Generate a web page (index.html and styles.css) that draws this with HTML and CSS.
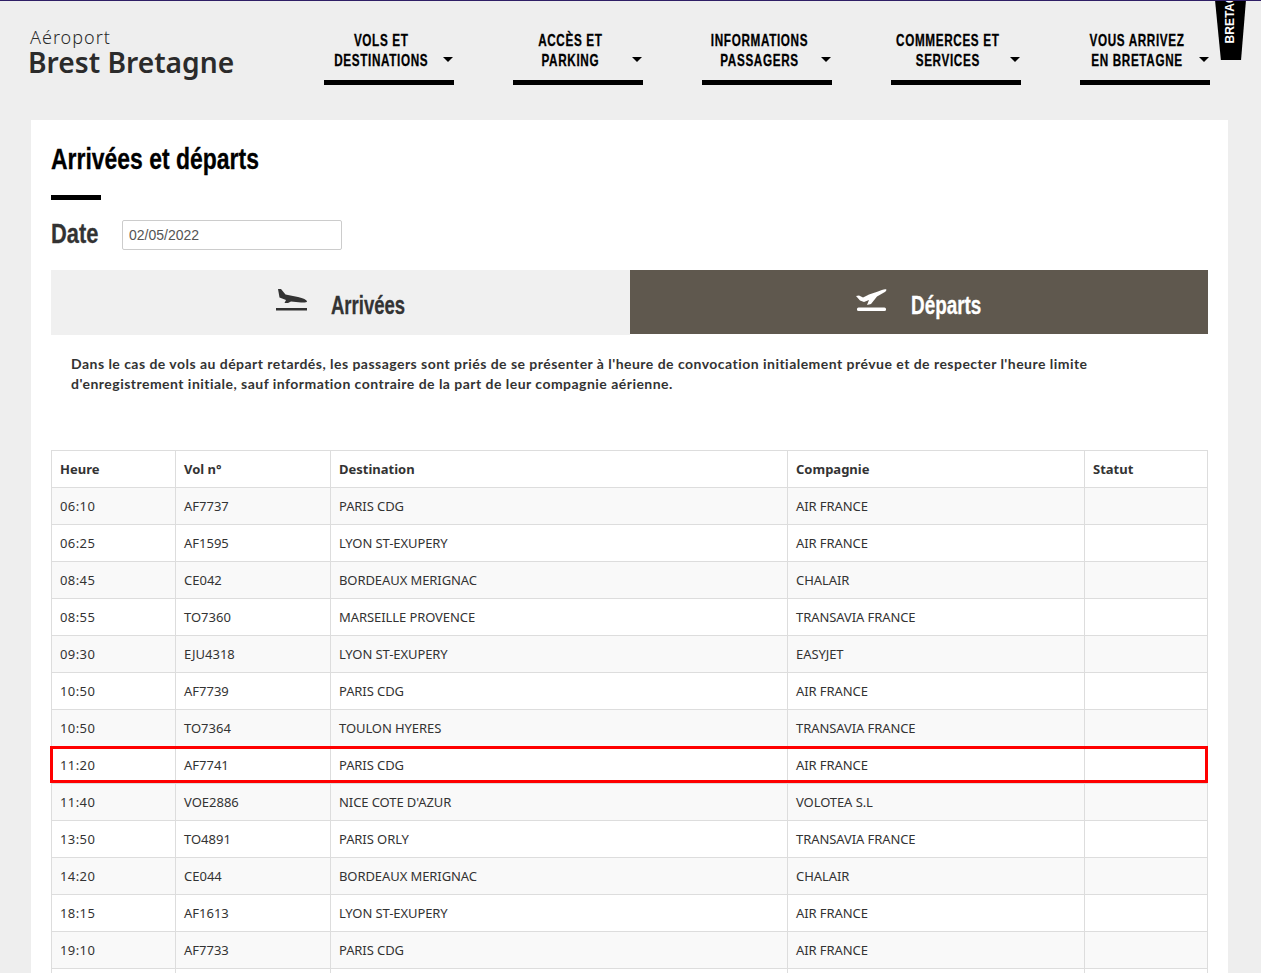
FILE: index.html
```html
<!DOCTYPE html>
<html lang="fr">
<head>
<meta charset="utf-8">
<title>Arrivées et départs</title>
<link rel="stylesheet" href="styles.css">
</head>
<body>
<header class="header">
  <a class="logo">
    <span class="logo-top">Aéroport</span>
    <span class="logo-main">Brest Bretagne</span>
  </a>
  <nav class="nav">
    <a class="nav-item"><span class="nav-label"><span class="cond">VOLS ET<br>DESTINATIONS</span></span><i class="caret"></i></a>
    <a class="nav-item"><span class="nav-label"><span class="cond">ACCÈS ET<br>PARKING</span></span><i class="caret"></i></a>
    <a class="nav-item"><span class="nav-label"><span class="cond">INFORMATIONS<br>PASSAGERS</span></span><i class="caret"></i></a>
    <a class="nav-item"><span class="nav-label"><span class="cond">COMMERCES ET<br>SERVICES</span></span><i class="caret"></i></a>
    <a class="nav-item"><span class="nav-label"><span class="cond">VOUS ARRIVEZ<br>EN BRETAGNE</span></span><i class="caret"></i></a>
  </nav>
  <div class="badge"><span class="badge-text">BRETAGNE</span></div>
</header>
<main class="card">
  <h1 class="title"><span class="title-text">Arrivées et départs</span></h1>
  <div class="rule"></div>
  <div class="date-row">
    <label class="date-label"><span class="date-text">Date</span></label>
    <input class="date-input" type="text" value="02/05/2022">
  </div>
  <div class="tabs">
    <a class="tab">
      <svg class="tab-icon" viewBox="0 0 31 24"><path d="M2 0 L5 0 L9.5 5.5 L22 8 C27 9 31 11 31 12.5 C31 13.5 28 13.8 25 13.5 L15 12.5 L12 14 L8.5 14 L10 11 L3.5 8.5 Z"/><rect x="0" y="19" width="31" height="2.5"/></svg>
      <span class="tab-label"><span class="tab-text">Arrivées</span></span>
    </a>
    <a class="tab tab-active">
      <svg class="tab-icon" viewBox="0 0 31 24"><path d="M30 .3 C31 1 30 2.5 28 3.5 L21 7.5 L15 15 L11 16 L13 11 L8 13 L4 11.5 L0 7 L3 6.5 L7 8.5 L13 5.5 L22 2.5 C25 .8 29 -.3 30 .3Z"/><rect x="1" y="18.5" width="29" height="3.5" rx="1.5"/></svg>
      <span class="tab-label"><span class="tab-text">Départs</span></span>
    </a>
  </div>
  <p class="notice">Dans le cas de vols au départ retardés, les passagers sont priés de se présenter à l'heure de convocation initialement prévue et de respecter l'heure limite d'enregistrement initiale, sauf information contraire de la part de leur compagnie aérienne.</p>
  <table class="flights">
    <thead>
      <tr><th class="c1">Heure</th><th class="c2">Vol n°</th><th class="c3">Destination</th><th class="c4">Compagnie</th><th class="c5">Statut</th></tr>
    </thead>
    <tbody>
      <tr><td>06:10</td><td>AF7737</td><td>PARIS CDG</td><td>AIR FRANCE</td><td></td></tr>
      <tr><td>06:25</td><td>AF1595</td><td>LYON ST-EXUPERY</td><td>AIR FRANCE</td><td></td></tr>
      <tr><td>08:45</td><td>CE042</td><td>BORDEAUX MERIGNAC</td><td>CHALAIR</td><td></td></tr>
      <tr><td>08:55</td><td>TO7360</td><td>MARSEILLE PROVENCE</td><td>TRANSAVIA FRANCE</td><td></td></tr>
      <tr><td>09:30</td><td>EJU4318</td><td>LYON ST-EXUPERY</td><td>EASYJET</td><td></td></tr>
      <tr><td>10:50</td><td>AF7739</td><td>PARIS CDG</td><td>AIR FRANCE</td><td></td></tr>
      <tr><td>10:50</td><td>TO7364</td><td>TOULON HYERES</td><td>TRANSAVIA FRANCE</td><td></td></tr>
      <tr class="hl"><td class="hl-start">11:20</td><td>AF7741</td><td>PARIS CDG</td><td>AIR FRANCE</td><td></td></tr>
      <tr><td>11:40</td><td>VOE2886</td><td>NICE COTE D'AZUR</td><td>VOLOTEA S.L</td><td></td></tr>
      <tr><td>13:50</td><td>TO4891</td><td>PARIS ORLY</td><td>TRANSAVIA FRANCE</td><td></td></tr>
      <tr><td>14:20</td><td>CE044</td><td>BORDEAUX MERIGNAC</td><td>CHALAIR</td><td></td></tr>
      <tr><td>18:15</td><td>AF1613</td><td>LYON ST-EXUPERY</td><td>AIR FRANCE</td><td></td></tr>
      <tr><td>19:10</td><td>AF7733</td><td>PARIS CDG</td><td>AIR FRANCE</td><td></td></tr>
      <tr><td>&nbsp;</td><td></td><td></td><td></td><td></td></tr>
    </tbody>
  </table>
</main>
</body>
</html>
```
FILE: styles.css
```css
* { box-sizing: border-box; }
html, body { margin: 0; padding: 0; }
body {
  background: #eeeeee;
  border-top: 1px solid #2f1f66;
  font-family: "Noto Sans", sans-serif;
  color: #333;
  width: 1261px;
  overflow-x: hidden;
}
.header {
  position: relative;
  height: 119px;
  display: flex;
  align-items: flex-start;
  padding-left: 28px;
}
.logo { display: flex; flex-direction: column; width: 296px; padding-top: 26px; color: #2b2b2b; font-family: "Noto Sans", sans-serif; }
.logo-top { font-size: 18px; line-height: 20px; font-weight: 300; padding-left: 2px; letter-spacing: 1px; }
.logo-main { font-size: 28.2px; line-height: 31px; font-weight: 600; }
.nav { display: flex; gap: 59px; padding-top: 29px; }
.nav-item {
  width: 130px;
  height: 55px;
  border-bottom: 5px solid #000;
  display: flex;
  color: #000;
  position: relative;
}
.nav-label {
  width: 114px;
  height: 40px;
  display: flex;
  justify-content: center;
  text-align: center;
  font-family: "Liberation Sans", sans-serif;
  font-weight: 700;
  font-size: 16.5px;
  line-height: 20px;
  letter-spacing: .9px;
}
.cond { flex: none; white-space: nowrap; transform: scaleX(.71); -webkit-text-stroke: .3px #000; }
.caret {
  position: absolute;
  right: 1px;
  top: 27px;
  border-left: 5px solid transparent;
  border-right: 5px solid transparent;
  border-top: 5px solid #000;
}
.badge {
  position: absolute;
  left: 1215px;
  top: -1px;
  width: 31px;
  height: 60px;
  background: #000;
  clip-path: polygon(0 0, 100% 0, 84% 100%, 19% 100%);
  overflow: hidden;
}
.badge-text {
  position: absolute;
  left: 8px;
  bottom: 17px;
  writing-mode: vertical-rl;
  transform: rotate(180deg);
  color: #fff;
  font-family: "Liberation Sans", sans-serif;
  font-weight: 700;
  font-size: 12px;
  line-height: 14px;
  white-space: nowrap;
}
.card {
  margin-left: 31px;
  width: 1197px;
  background: #fff;
  padding: 20px;
}
.title {
  margin: 0;
  height: 55px;
  font-family: "Liberation Sans", sans-serif;
  font-weight: 700;
  font-size: 30px;
  line-height: 37px;
  color: #000;
}
.title-text, .date-text, .tab-text { display: inline-block; white-space: nowrap; transform-origin: left center; -webkit-text-stroke: .3px currentColor; }
.title-text { transform: scaleX(.765); }
.rule { width: 50px; height: 5px; background: #000; }
.date-row { display: flex; align-items: center; gap: 23px; margin-top: 20px; height: 30px; }
.date-label {
  width: 48px;
  padding-bottom: 2px;
  font-family: "Liberation Sans", sans-serif;
  font-weight: 700;
  font-size: 28px;
  color: #333;
}
.date-text { transform: scaleX(.78); }
.date-input {
  width: 220px;
  height: 30px;
  border: 1px solid #ccc;
  border-radius: 2px;
  padding: 0 6px;
  font-family: "Liberation Sans", sans-serif;
  font-size: 14px;
  color: #555;
}
.tabs { display: flex; margin-top: 20px; width: 1157px; }
.tab {
  flex: 0 0 579px;
  height: 65px;
  background: #f0f0f0;
  display: flex;
  align-items: center;
  justify-content: center;
  gap: 24px;
  color: #333;
}
.tab-active { flex: 1; height: 64px; background: #5f584e; color: #fff; }
.tab-icon { width: 31px; height: 24px; fill: currentColor; margin-top: -3px; }
.tab-label {
  width: 74px;
  padding-top: 5px;
  font-family: "Liberation Sans", sans-serif;
  font-weight: 700;
  font-size: 25px;
}
.tab-text { transform: scaleX(.74); }
.tab-active .tab-label { width: 71px; padding-top: 6px; }
.tab-active .tab-text { transform: scaleX(.755); }
.notice {
  margin: 19px 0 56px;
  padding: 0 100px 0 20px;
  font-family: "Lato", sans-serif;
  font-weight: 700;
  font-size: 14px;
  line-height: 20px;
  letter-spacing: .47px;
  color: #333;
}
.flights {
  width: 1157px;
  border-collapse: collapse;
  table-layout: fixed;
  font-size: 13px;
  color: #333;
}
.flights th, .flights td {
  height: 37px;
  padding: 0 8px;
  border: 1px solid #ddd;
  text-align: left;
  line-height: 20px;
}
.flights th { font-weight: 700; }
.flights td:nth-child(1) { letter-spacing: .4px; }
.flights td:nth-child(3), .flights td:nth-child(4) { letter-spacing: -.08px; }
.c1 { width: 124px; }
.c2 { width: 155px; }
.c3 { width: 457px; }
.c4 { width: 297px; }
.flights tbody tr:nth-child(odd) { background: #f9f9f9; }
.flights tr.hl { background: #fff; }
.hl-start { position: relative; }
.hl-start::after {
  content: "";
  box-sizing: border-box;
  position: absolute;
  left: -2px;
  top: -1px;
  width: 1158px;
  height: 37px;
  border: 3px solid #f00;
  z-index: 1;
}
```
